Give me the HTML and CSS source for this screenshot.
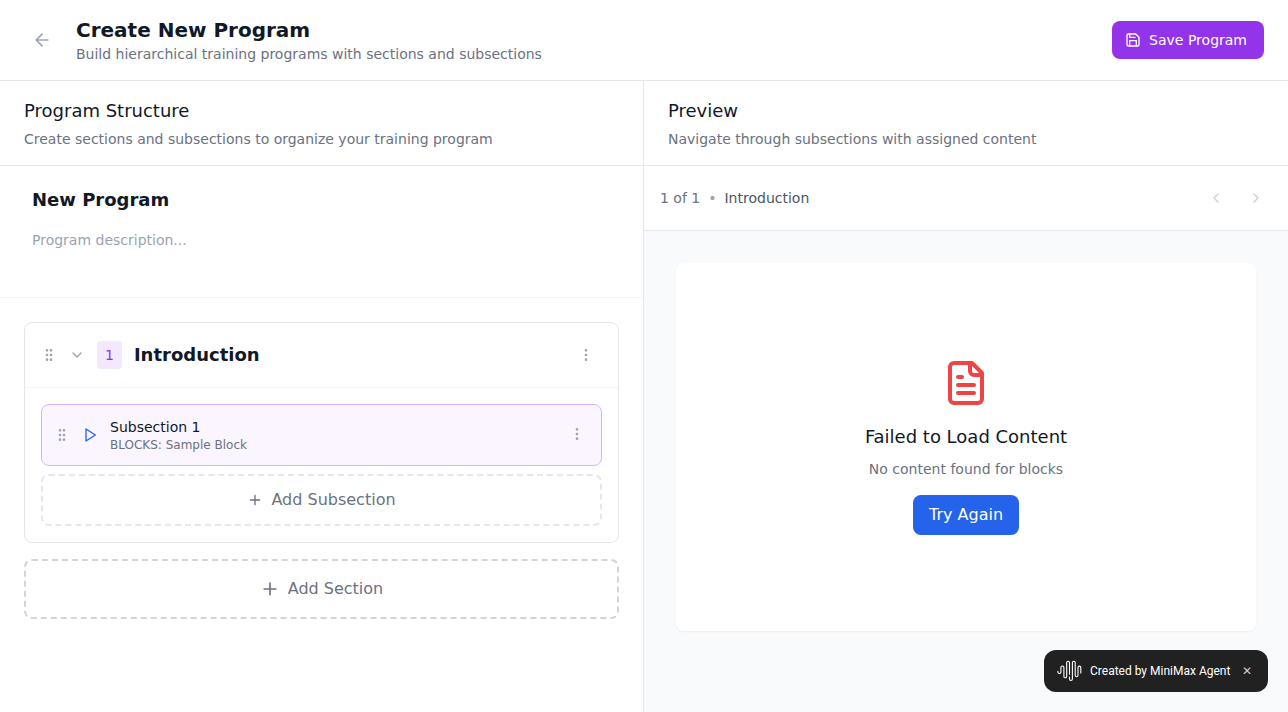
FILE: index.html
```html
<!DOCTYPE html>
<html lang="en">
<head>
<meta charset="utf-8">
<title>Create New Program</title>
<link rel="stylesheet" href="styles.css">
</head>
<body>
<svg class="defs" width="0" height="0">
  <symbol id="grip" viewBox="0 0 24 24"><circle cx="9" cy="12" r="1"/><circle cx="9" cy="5" r="1"/><circle cx="9" cy="19" r="1"/><circle cx="15" cy="12" r="1"/><circle cx="15" cy="5" r="1"/><circle cx="15" cy="19" r="1"/></symbol>
  <symbol id="dots" viewBox="0 0 24 24"><circle cx="12" cy="12" r="1"/><circle cx="12" cy="5" r="1"/><circle cx="12" cy="19" r="1"/></symbol>
  <symbol id="plus" viewBox="0 0 24 24"><path d="M5 12h14M12 5v14"/></symbol>
</svg>
<div class="app">
  <header class="topbar">
    <div class="topbar-left">
      <button class="back"><svg class="icon i20" viewBox="0 0 24 24"><path d="m12 19-7-7 7-7M19 12H5"/></svg></button>
      <div>
        <h1>Create New Program</h1>
        <p class="muted">Build hierarchical training programs with sections and subsections</p>
      </div>
    </div>
    <button class="save"><svg class="icon i16" viewBox="0 0 24 24"><path d="M19 21H5a2 2 0 0 1-2-2V5a2 2 0 0 1 2-2h11l5 5v11a2 2 0 0 1-2 2z"/><path d="M17 21v-8H7v8M7 3v5h8"/></svg>Save Program</button>
  </header>
  <main class="columns">
    <section class="builder">
      <div class="panel-head">
        <h2>Program Structure</h2>
        <p class="muted">Create sections and subsections to organize your training program</p>
      </div>
      <div class="program-form">
        <div class="program-name">New Program</div>
        <div class="program-desc">Program description...</div>
      </div>
      <div class="structure">
        <div class="card">
          <div class="card-head">
            <svg class="icon i16" viewBox="0 0 24 24"><use href="#grip"/></svg>
            <button class="toggle"><svg class="icon i16" viewBox="0 0 24 24"><path d="m6 9 6 6 6-6"/></svg></button>
            <span class="badge">1</span>
            <h3>Introduction</h3>
            <button class="menu"><svg class="icon i16" viewBox="0 0 24 24"><use href="#dots"/></svg></button>
          </div>
          <div class="card-body">
            <div class="subsection">
              <svg class="icon i16" viewBox="0 0 24 24"><use href="#grip"/></svg>
              <svg class="icon i16 play" viewBox="0 0 24 24"><path d="m6 3 14 9-14 9z"/></svg>
              <div class="subsection-text">
                <div class="subsection-title">Subsection 1</div>
                <div class="subsection-meta">BLOCKS: Sample Block</div>
              </div>
              <button class="menu-small"><svg class="icon i16" viewBox="0 0 24 24"><use href="#dots"/></svg></button>
            </div>
            <button class="add add-sub"><svg class="icon i16" viewBox="0 0 24 24"><use href="#plus"/></svg>Add Subsection</button>
          </div>
        </div>
        <button class="add add-section"><svg class="icon i20" viewBox="0 0 24 24"><use href="#plus"/></svg>Add Section</button>
      </div>
    </section>
    <section class="preview">
      <div class="panel-head">
        <h2>Preview</h2>
        <p class="muted">Navigate through subsections with assigned content</p>
      </div>
      <div class="pager">
        <span class="count">1 of 1</span><span class="bullet">•</span><span class="where">Introduction</span>
        <button class="nav first"><svg class="icon i16" viewBox="0 0 24 24"><path d="m15 18-6-6 6-6"/></svg></button>
        <button class="nav"><svg class="icon i16" viewBox="0 0 24 24"><path d="m9 18 6-6-6-6"/></svg></button>
      </div>
      <div class="stage">
        <div class="error-card">
          <svg class="icon i48" viewBox="0 0 24 24"><path d="M15 2H6a2 2 0 0 0-2 2v16a2 2 0 0 0 2 2h12a2 2 0 0 0 2-2V7Z"/><path d="M14 2v4a2 2 0 0 0 2 2h4M10 9H8M16 13H8M16 17H8"/></svg>
          <h2>Failed to Load Content</h2>
          <p class="muted">No content found for blocks</p>
          <button class="retry">Try Again</button>
        </div>
      </div>
    </section>
  </main>
</div>
<div class="toast">
  <svg class="wave" viewBox="0 0 25 22"><path d="M.9 11.2v.8a1.5 1.5 0 0 0 3 0V7.5a1.5 1.5 0 0 1 3 0v8.9a1.4 1.4 0 0 0 2.8 0V2.6a1.4 1.4 0 0 1 2.8 0v11.6M12.5 17v2a1.45 1.45 0 0 0 2.9 0V2.6a1.4 1.4 0 0 1 2.8 0v12.7a1.4 1.4 0 0 0 2.8 0V7.5a1.4 1.4 0 0 1 2.8 0V13"/></svg>
  <span>Created by MiniMax Agent</span>
  <button class="close">✕</button>
</div>
</body>
</html>
```
FILE: styles.css
```css
* { box-sizing: border-box; }
body { margin: 0; font-family: "DejaVu Sans", sans-serif; font-size: 16px; line-height: 24px; color: #111827; background: #fff; }
h1, h2, h3, p { margin: 0; }
button { border: 0; padding: 0; background: none; font: inherit; color: inherit; }
svg { display: block; flex: none; }
.defs { position: absolute; }
.icon { fill: none; stroke: currentColor; stroke-width: 2; stroke-linecap: round; stroke-linejoin: round; }
.i16 { width: 16px; height: 16px; }
.i20 { width: 20px; height: 20px; }
.i48 { width: 48px; height: 48px; }
.muted { font-size: 14px; line-height: 20px; color: #6b7280; }

.app { height: 712px; display: flex; flex-direction: column; overflow: hidden; }
.topbar { display: flex; justify-content: space-between; align-items: center; padding: 16px 24px; border-bottom: 1px solid #e5e7eb; }
.topbar-left { display: flex; align-items: center; gap: 16px; }
.back { padding: 8px; color: #9ca3af; }
h1 { font-size: 20px; line-height: 28px; font-weight: 700; }
.save { display: flex; align-items: center; gap: 8px; height: 38px; padding: 0 17px 0 13px; border-radius: 8px; background: #9333ea; color: #fff; font-size: 14px; line-height: 20px; }

.columns { flex: 1; display: grid; grid-template-columns: 1fr 1fr; min-height: 0; }
.builder { border-right: 1px solid #e5e7eb; }
.panel-head { padding: 16px 24px; border-bottom: 1px solid #e5e7eb; }
h2 { font-size: 18px; line-height: 28px; font-weight: 400; }
.panel-head .muted { margin-top: 4px; }

.program-form { height: 132px; padding: 16px 24px; border-bottom: 1px solid #f3f4f6; }
.program-name { padding: 4px 8px; font-size: 18px; line-height: 28px; font-weight: 700; }
.program-desc { margin-top: 8px; padding: 4px 8px; font-size: 14px; line-height: 20px; color: #9ca3af; }

.structure { display: flex; flex-direction: column; gap: 16px; padding: 24px; }
.card { border: 1px solid #e5e7eb; border-radius: 8px; }
.card-head { display: flex; align-items: center; padding: 16px; height: 65px; border-bottom: 1px solid #f3f4f6; color: #9ca3af; }
.toggle { margin: 0 8px; padding: 4px; }
.badge { padding: 4px 8px; border-radius: 4px; background: #f3e8ff; color: #9333ea; font-size: 14px; line-height: 20px; }
h3 { flex: 1; margin-left: 12px; font-size: 18px; line-height: 28px; font-weight: 700; color: #111827; }
.menu { padding: 8px; }
.card-body { display: flex; flex-direction: column; gap: 8px; padding: 16px; }
.subsection { display: flex; align-items: center; gap: 12px; padding: 12px; height: 62px; border: 1px solid #d8b4fe; border-radius: 8px; background: #faf5ff; color: #9ca3af; }
.play { color: #2563eb; }
.subsection-text { flex: 1; }
.subsection-title { font-size: 14px; line-height: 20px; color: #111827; }
.subsection-meta { font-size: 12px; line-height: 16px; color: #6b7280; }
.menu-small { padding: 4px; margin-bottom: 2px; }
.add { display: flex; align-items: center; justify-content: center; gap: 8px; border-radius: 8px; color: #6b7280; }
.add-sub { height: 52px; border: 2px dashed #e5e7eb; }
.add-section { height: 60px; border: 2px dashed #d1d5db; }

.preview { display: flex; flex-direction: column; min-height: 0; }
.pager { display: flex; align-items: center; gap: 8px; height: 65px; padding: 16px; border-bottom: 1px solid #e5e7eb; font-size: 14px; line-height: 20px; }
.count { color: #6b7280; }
.bullet { color: #9ca3af; }
.where { color: #4b5563; }
.nav { padding: 8px; color: #9ca3af; opacity: .5; }
.first { margin-left: auto; }
.stage { flex: 1; padding: 32px; background: #f9fafb; }
.error-card { display: flex; flex-direction: column; align-items: center; justify-content: center; height: 368px; border-radius: 8px; background: #fff; box-shadow: 0 1px 2px rgba(0, 0, 0, .05); }
.error-card .icon { color: #ef4444; margin-bottom: 16px; }
.error-card h2 { margin-bottom: 8px; }
.retry { margin-top: 16px; padding: 8px 16px; border-radius: 8px; background: #2563eb; color: #fff; }

.toast { position: fixed; right: 20px; bottom: 20px; display: flex; align-items: center; width: 224px; height: 42px; padding: 0 13px; border-radius: 12px; background: #212121; color: #fff; font-family: Roboto, sans-serif; font-size: 12px; font-weight: 400; line-height: 18px; white-space: nowrap; }
.wave { width: 25px; height: 22px; margin-right: 8px; fill: none; stroke: #fff; stroke-width: 1.1; stroke-linecap: round; }
.close { width: 16px; margin-left: auto; color: #ccc; font-size: 12px; text-align: center; }
```
